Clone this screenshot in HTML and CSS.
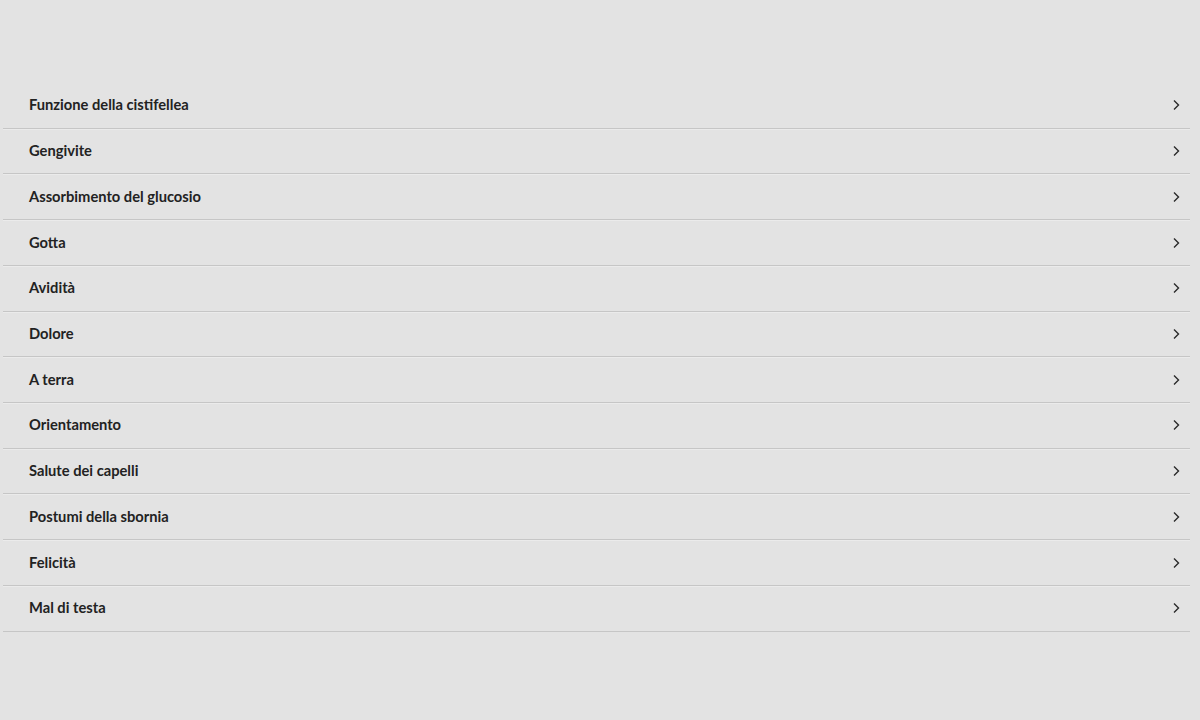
FILE: index.html
```html
<!DOCTYPE html>
<html lang="it">
<head>
  <meta charset="UTF-8">
  <meta name="viewport" content="width=device-width, initial-scale=1.0">
  <title>Argomenti</title>
  <link rel="stylesheet" href="styles.css">
</head>
<body>
  <ul class="topic-list">
    <li class="topic"><span>Funzione della cistifellea</span><svg class="chevron" viewBox="0 0 8 12"><path d="M2 1.5 L6.5 6 L2 10.5"/></svg></li>
    <li class="topic"><span>Gengivite</span><svg class="chevron" viewBox="0 0 8 12"><path d="M2 1.5 L6.5 6 L2 10.5"/></svg></li>
    <li class="topic"><span>Assorbimento del glucosio</span><svg class="chevron" viewBox="0 0 8 12"><path d="M2 1.5 L6.5 6 L2 10.5"/></svg></li>
    <li class="topic"><span>Gotta</span><svg class="chevron" viewBox="0 0 8 12"><path d="M2 1.5 L6.5 6 L2 10.5"/></svg></li>
    <li class="topic"><span>Avidità</span><svg class="chevron" viewBox="0 0 8 12"><path d="M2 1.5 L6.5 6 L2 10.5"/></svg></li>
    <li class="topic"><span>Dolore</span><svg class="chevron" viewBox="0 0 8 12"><path d="M2 1.5 L6.5 6 L2 10.5"/></svg></li>
    <li class="topic"><span>A terra</span><svg class="chevron" viewBox="0 0 8 12"><path d="M2 1.5 L6.5 6 L2 10.5"/></svg></li>
    <li class="topic"><span>Orientamento</span><svg class="chevron" viewBox="0 0 8 12"><path d="M2 1.5 L6.5 6 L2 10.5"/></svg></li>
    <li class="topic"><span>Salute dei capelli</span><svg class="chevron" viewBox="0 0 8 12"><path d="M2 1.5 L6.5 6 L2 10.5"/></svg></li>
    <li class="topic"><span>Postumi della sbornia</span><svg class="chevron" viewBox="0 0 8 12"><path d="M2 1.5 L6.5 6 L2 10.5"/></svg></li>
    <li class="topic"><span>Felicità</span><svg class="chevron" viewBox="0 0 8 12"><path d="M2 1.5 L6.5 6 L2 10.5"/></svg></li>
    <li class="topic"><span>Mal di testa</span><svg class="chevron" viewBox="0 0 8 12"><path d="M2 1.5 L6.5 6 L2 10.5"/></svg></li>
  </ul>
</body>
</html>
```

FILE: styles.css
```css
body {
  font-family: Lato, "Open Sans", sans-serif;
  background-color: #e3e3e3;
  color: #222;
  margin: 0;
}
.topic-list {
  list-style: none;
  margin: 83px 10px 0 3px;
  padding: 0;
}
.topic {
  display: flex;
  align-items: center;
  justify-content: space-between;
  height: 44.73px;
  padding: 0 10px 0 26px;
  border-bottom: 1px solid #c6c6c6;
  box-shadow: 0 1px 0 #ebebeb;
  font-size: 14.7px;
  font-weight: 700;
}
.topic span {
  margin-top: -2px;
}
.chevron {
  width: 8px;
  height: 12px;
  fill: none;
  stroke: #2a2a2a;
  stroke-width: 1.4;
}
```
